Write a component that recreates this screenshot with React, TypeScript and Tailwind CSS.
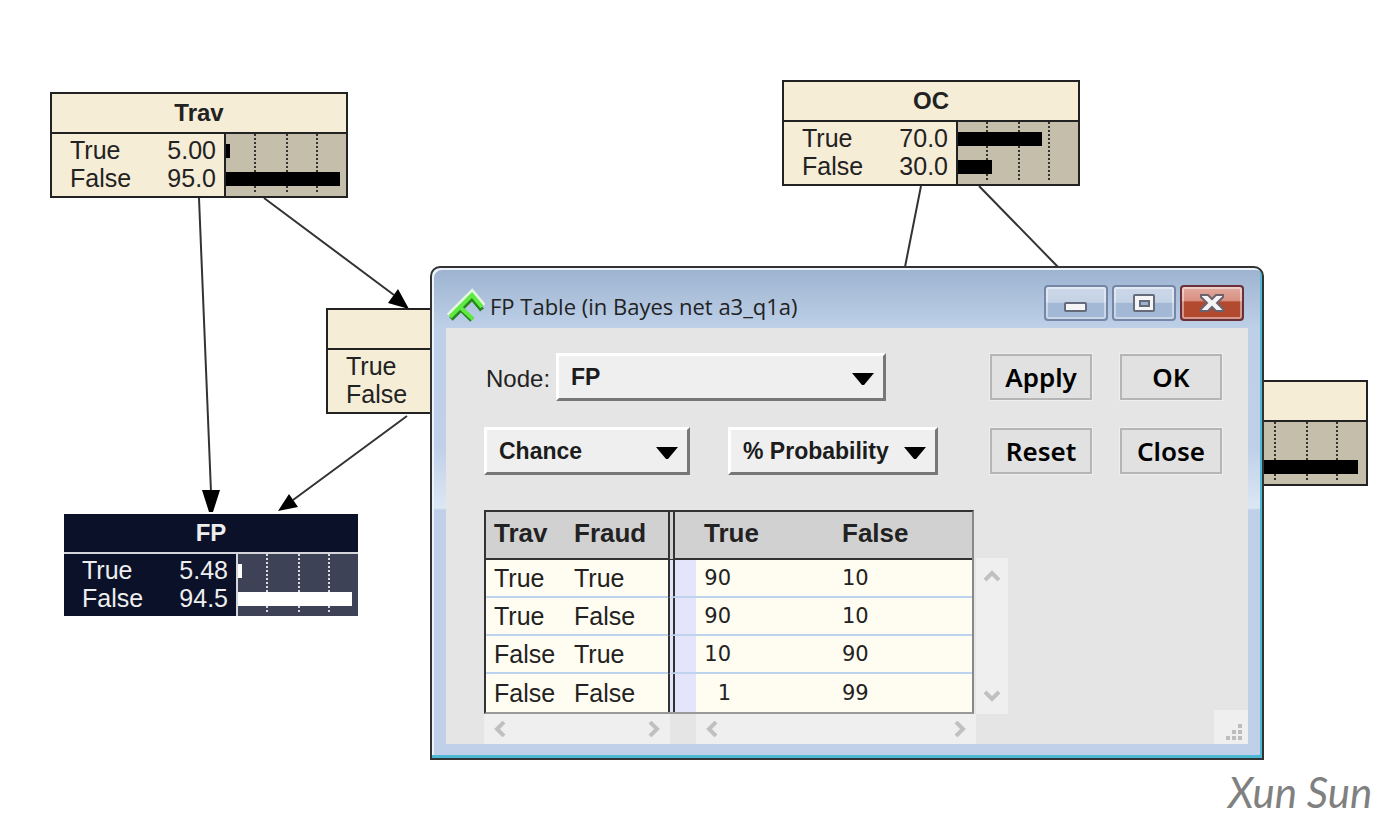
import type { ReactNode } from "react";

type NodeProps = {
  title: string;
  place: string;
  rows: { label: string; value: string; bar: number }[];
  dark?: boolean;
};

function BeliefNode({ title, place, rows, dark = false }: NodeProps) {
  const line = dark ? "border-[#d4d6dc]" : "border-[#222]";
  const ink = dark ? "border-transparent bg-[#0a1128] bg-clip-padding text-[#eee]" : "border-[#222] bg-[#f5edd6] text-[#222]";
  return (
    <section className={`absolute border-2 text-[25px] ${ink} ${place}`}>
      <h2 className={`flex h-10 items-center justify-center border-b-2 text-2xl font-bold ${line}`}>{title}</h2>
      <div className="flex h-[62px]">
        <dl className="flex w-[172px] flex-col pt-[2px] pr-2 pl-[18px] leading-7">
          {rows.map((r) => (
            <div key={r.label} className="flex h-7 items-center justify-between">
              <dt>{r.label}</dt>
              <dd>{r.value}</dd>
            </div>
          ))}
        </dl>
        <div className={`relative flex flex-1 flex-col gap-[14px] border-l-2 pt-[10px] ${line} ${dark ? "bg-[#3d4256]" : "bg-[#c5beab]"}`}>
          <div className="absolute inset-x-0 top-0 bottom-1 flex">
            {["w-[30px]", "w-8", "w-[30px]"].map((w, i) => (
              <i key={i} className={`border-r-2 border-dotted ${w} ${dark ? "border-[#ddd]" : "border-[#333]"}`} />
            ))}
          </div>
          {rows.map((r) => (
            <div key={r.label} className={`relative h-[14px] ${dark ? "bg-white" : "bg-black"}`} style={{ width: r.bar }} />
          ))}
        </div>
      </div>
    </section>
  );
}

function Picker({ id, label, value, width }: { id: string; label: string; value: string; width: string }) {
  return (
    <div className={`relative h-12 ${width}`}>
      <select
        id={id}
        aria-label={label}
        className="size-full appearance-none border-[3px] border-t-white border-r-[#777] border-b-[#777] border-l-white bg-[#efefef] pl-3 text-[23px] font-bold text-[#1c1c1c]"
      >
        <option>{value}</option>
      </select>
      <svg className="pointer-events-none absolute top-5 right-3 h-3 w-[22px]" viewBox="0 0 22 12">
        <path d="M0 0H22L12 12H10Z" />
      </svg>
    </div>
  );
}

function PushButton({ children }: { children: ReactNode }) {
  return (
    <button className="h-[46px] w-[102px] border-2 border-[#b5b5b5] bg-[#e1e1e1] font-['Noto_Sans',sans-serif] text-[26px] leading-8 font-semibold text-black outline outline-[#eee]">
      {children}
    </button>
  );
}

function Chevron({ turn }: { turn: string }) {
  return (
    <svg className={`size-4 ${turn}`} viewBox="0 0 16 16" fill="none" stroke="#c0c0c0" strokeWidth="4">
      <path d="M12 1L5 8L12 15" />
    </svg>
  );
}

const caption = "flex h-9 w-16 items-center justify-center rounded-[4px] border-2 shadow-[inset_0_0_0_2px_#ffffff70]";
const blueCaption = "border-[#7487a8] bg-linear-to-b from-[#ccd8e8] from-0% via-[#c4d2e5] via-48% to-[#a3b8d4] to-50%";

const tableRows = [
  ["True", "True", "90", "10"],
  ["True", "False", "90", "10"],
  ["False", "True", "10", "90"],
  ["False", "False", "1", "99"],
];

const headCell = "border-b-2 border-[#333] pb-1 pl-2";
const numberCell = "pl-2 font-['DejaVu_Sans',sans-serif] text-[21px] leading-6";

function TableWindow() {
  return (
    <section className="absolute top-[266px] left-[430px] flex h-[494px] w-[834px] flex-col rounded-t-[10px] border-2 border-[#333] bg-[linear-gradient(#9cb2cf_0px,#bed0e8_60px,#bfd0e8_180px,#dce7f4_240px,#bfd0e8_242px)] px-[14px] pb-[14px] shadow-[inset_-2px_-3px_0_#4bb9d3,inset_2px_2px_0_#edf3fa]">
      <header className="flex h-[60px] shrink-0 items-center justify-between pr-1">
        <div className="flex items-center gap-1 pt-4">
          <svg className="h-9 w-10" viewBox="0 0 40 36" fill="none">
            <path d="M4 29L26 7L36 19" stroke="#e3f8df" strokeWidth="9" />
            <path d="M5 31L26 10L36 22M16 22L26 32" stroke="#26851e" strokeWidth="5" />
            <path d="M4 29L26 7L36 19M15 20L27 31" stroke="#5fea42" strokeWidth="4" />
          </svg>
          <h1 className="font-['Open_Sans',sans-serif] text-[22px] text-[#222]">FP Table (in Bayes net a3_q1a)</h1>
        </div>
        <div className="flex gap-1 pt-[10px]">
          <button aria-label="Minimize" className={`${caption} ${blueCaption}`}>
            <svg className="h-6 w-6" viewBox="0 0 24 24"><rect x="1" y="12" width="21" height="8" rx="1" fill="#f5f5f5" stroke="#666b7b" strokeWidth="2" /></svg>
          </button>
          <button aria-label="Maximize" className={`${caption} ${blueCaption}`}>
            <svg className="h-6 w-6" viewBox="0 0 24 24">
              <rect x="2" y="4" width="20" height="16" rx="1" fill="#f5f5f5" stroke="#666b7b" strokeWidth="2" />
              <rect x="8" y="10" width="9" height="5" fill="#9cb2cf" stroke="#666b7b" strokeWidth="2" />
            </svg>
          </button>
          <button aria-label="Close window" className={`${caption} border-[#6b2f38] bg-linear-to-b from-[#e2aaa0] from-0% via-[#d98f80] via-44% to-[#b24a30] to-46%`}>
            <svg className="h-6 w-6" viewBox="0 0 24 24" fill="none">
              <path d="M1 4H8L12 8L16 4H23V6L17 12L23 18V20H16L12 16L8 20H1V18L7 12L1 6Z" fill="#f4f4f4" stroke="#6b626d" strokeWidth="2" />
            </svg>
          </button>
        </div>
      </header>

      <div className="relative flex flex-1 flex-col bg-[#e5e5e5] pt-[25px] pl-[38px]">
        <div className="flex justify-between pr-[26px]">
          <div className="flex flex-col gap-[26px]">
            <div className="flex">
              <label htmlFor="node" className="w-[72px] pt-[10px] pl-[2px] text-2xl text-[#222]">Node:</label>
              <Picker id="node" label="Node" value="FP" width="w-[330px]" />
            </div>
            <div className="flex gap-[38px]">
              <Picker id="kind" label="Kind" value="Chance" width="w-[206px]" />
              <Picker id="unit" label="Unit" value="% Probability" width="w-[210px]" />
            </div>
          </div>
          <div className="grid grid-cols-2 content-start gap-x-7 gap-y-7 pt-[1px]">
            <PushButton>Apply</PushButton>
            <PushButton>OK</PushButton>
            <PushButton>Reset</PushButton>
            <PushButton>Close</PushButton>
          </div>
        </div>

        <div className="mt-[35px] flex">
          <table className="w-[490px] table-fixed border-separate border-spacing-0 border-2 border-t-[#333] border-r-[#888] border-b-[#999] border-l-[#333] bg-[#fffdf1] text-[25px] leading-8 text-[#222]">
            <colgroup>
              <col className="w-20" /><col className="w-[102px]" /><col className="w-7" /><col className="w-[138px]" /><col />
            </colgroup>
            <thead>
              <tr className="h-12 bg-[#d1d1d1] text-left text-[26px]">
                <th className={headCell}>Trav</th>
                <th className={headCell}>Fraud</th>
                <th className="border-b-2 border-l-[7px] border-[#333] [border-left-style:double]" />
                <th className={headCell}>True</th>
                <th className={headCell}>False</th>
              </tr>
            </thead>
            <tbody>
              {tableRows.map(([a, b, t, f], i) => {
                const rule = i < 3 ? "border-b-2 border-b-[#bdd3ee]" : "";
                return (
                  <tr key={i} className="h-[38px]">
                    <td className={`pl-2 ${rule}`}>{a}</td>
                    <td className={`pl-2 ${rule}`}>{b}</td>
                    <td className={`border-l-[7px] border-l-[#333] bg-[#e4e4fb] [border-left-style:double] ${rule}`} />
                    <td className={`${numberCell} ${rule}`}>
                      <span className="inline-block w-[27px] text-right">{t}</span>
                    </td>
                    <td className={`${numberCell} ${rule}`}>{f}</td>
                  </tr>
                );
              })}
            </tbody>
          </table>
          <div className="mt-[48px] ml-[2px] flex w-8 flex-col items-center justify-between bg-[#efefef] py-[10px]">
            <Chevron turn="rotate-90" />
            <Chevron turn="-rotate-90" />
          </div>
        </div>
        <div className="flex flex-1 gap-[26px]">
          <div className="flex w-[186px] items-center justify-between bg-[#efefef] px-2">
            <Chevron turn="" />
            <Chevron turn="rotate-180" />
          </div>
          <div className="flex w-[280px] items-center justify-between bg-[#efefef] px-2">
            <Chevron turn="" />
            <Chevron turn="rotate-180" />
          </div>
        </div>
        <svg className="absolute right-0 bottom-0 h-[34px] w-[34px] bg-[#efefef]" viewBox="0 0 34 34" fill="#bdbdbd">
          <path d="M24 14h4v4h-4zM18 20h4v4h-4zM24 20h4v4h-4zM12 26h4v4h-4zM18 26h4v4h-4zM24 26h4v4h-4z" />
        </svg>
      </div>
    </section>
  );
}

export default function App() {
  return (
    <main className="relative min-h-screen overflow-hidden bg-white font-['Liberation_Sans',Arial,sans-serif]">
      <svg className="absolute top-0 left-0" width="1396" height="832" viewBox="0 0 1396 832" fill="none" stroke="#333" strokeWidth="2">
        <path d="M199 198L211 492M264 198L394 295M407 416L293 500M921 186L905 267M979 186L1058 267" />
        <path d="M202 490H220L213 512H209ZM278 511L289 494L298 507ZM398 289L388 303L409 309Z" fill="#000" stroke="none" />
      </svg>
      <BeliefNode title="Trav" place="top-[92px] left-[50px] w-[298px]" rows={[{ label: "True", value: "5.00", bar: 4 }, { label: "False", value: "95.0", bar: 114 }]} />
      <BeliefNode title="OC" place="top-[80px] left-[782px] w-[298px]" rows={[{ label: "True", value: "70.0", bar: 84 }, { label: "False", value: "30.0", bar: 34 }]} />
      <BeliefNode title="FP" dark place="top-[512px] left-[62px] w-[298px]" rows={[{ label: "True", value: "5.48", bar: 4 }, { label: "False", value: "94.5", bar: 114 }]} />
      <BeliefNode title="" place="top-[308px] left-[326px] w-[298px]" rows={[{ label: "True", value: "", bar: 0 }, { label: "False", value: "", bar: 0 }]} />
      <BeliefNode title="" place="top-[380px] left-[1070px] w-[298px]" rows={[{ label: "", value: "", bar: 0 }, { label: " ", value: "", bar: 112 }]} />
      <TableWindow />
      <p className="absolute top-[761px] left-[1228px] font-['Segoe_Script','Lato',cursive] text-[42px] text-[#808080] italic">Xun Sun</p>
    </main>
  );
}
